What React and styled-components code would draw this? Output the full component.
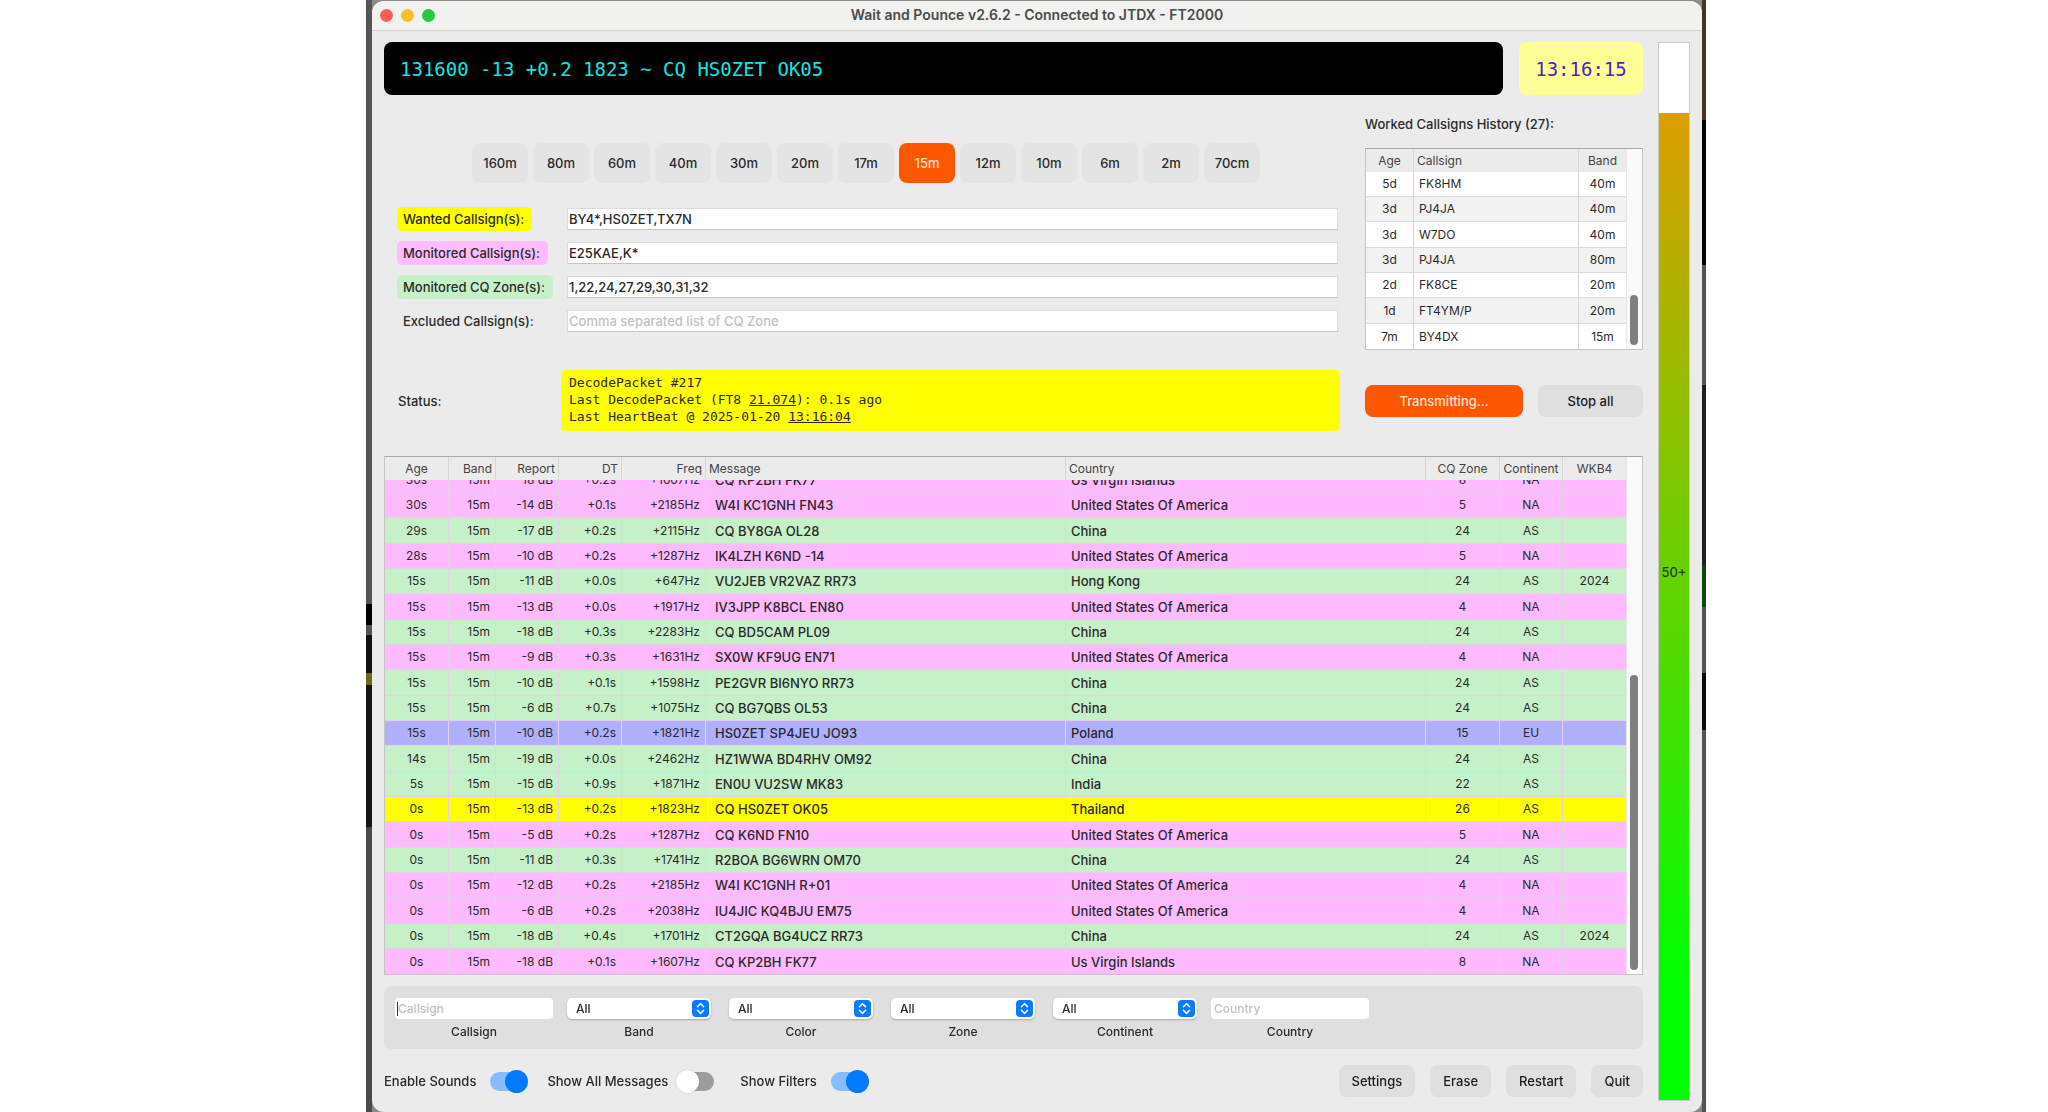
import React from "react";
import styled, { createGlobalStyle } from "styled-components";

const SANS = `Inter, "Liberation Sans", sans-serif`;
const MONO = `"DejaVu Sans Mono", "Liberation Mono", monospace`;

const GlobalStyle = createGlobalStyle`
  *, *::before, *::after { box-sizing: border-box; }
  body { margin: 0; background: #fff; font-family: ${SANS}; font-size: 13px; font-weight: 500; color: #2a2a2a; }
  button, input, select { font: inherit; color: inherit; margin: 0; }
`;

const Desktop = styled.div`
  height: 100vh;
  margin: 0 342px 0 366px;
  padding: 1px 4px 0 6px;
  display: flex;
  background:
    linear-gradient(#555 0 604px, #000 604px 625px, #555 625px 635px, #111 635px 673px, #6a6a1a 673px 685px, #151515 685px 827px, #4a4a4a 827px 100%) left / 6px 100% no-repeat,
    linear-gradient(#4a3226 0 120px, #050505 120px 265px, #555 265px 385px, #1f1f1f 385px 565px, #0a4a0a 565px 607px, #555 607px 673px, #0d0d0d 673px 730px, #555 730px 100%) right / 4px 100% no-repeat,
    #8a8a8a;
`;

const Window = styled.main`
  flex: 1;
  min-width: 0;
  display: flex;
  flex-direction: column;
  background: #ebebeb;
  border-radius: 12px;
  overflow: hidden;
`;

const TitleBar = styled.header`
  flex: none;
  height: 30px;
  padding: 0 8px;
  display: grid;
  grid-template-columns: 1fr auto 1fr;
  align-items: center;
  background: #f1f1f0;
  border-bottom: 1px solid #d2d2d0;
`;

const Lights = styled.div`
  display: flex;
  gap: 8px;
`;

const Light = styled.button`
  width: 13px;
  height: 13px;
  padding: 0;
  border: 0;
  border-radius: 50%;
  background: ${(p) => p.$color};
`;

const Title = styled.h1`
  margin: 0;
  padding-bottom: 2px;
  font-size: 14px;
  line-height: 20px;
  font-weight: 600;
  color: #4a4a4a;
`;

const Body = styled.div`
  flex: 1;
  min-height: 0;
  padding: 11px 12px;
  display: grid;
  grid-template-columns: minmax(0, 1fr) 32px;
  gap: 15px;
`;

const Main = styled.div`
  min-height: 0;
  padding-bottom: 4px;
  display: flex;
  flex-direction: column;
`;

const TopRow = styled.div`
  display: flex;
  gap: 16px;
`;

const Decode = styled.output`
  flex: 1;
  height: 53px;
  padding: 0 16px;
  display: flex;
  align-items: center;
  border-radius: 8px;
  background: #000;
  color: #17e3e3;
  font: 19px/24px ${MONO};
  white-space: pre;
`;

const Clock = styled.time`
  width: 124px;
  height: 53px;
  display: flex;
  align-items: center;
  justify-content: center;
  border-radius: 8px;
  background: #ffff96;
  color: #5223c9;
  font: 19px/24px ${MONO};
`;

const Setup = styled.div`
  padding-top: 18px;
  display: grid;
  grid-template-columns: minmax(0, 1fr) 278px;
  column-gap: 23px;
`;

const Left = styled.div`
  padding: 30px 4px 0 13px;
  display: flex;
  flex-direction: column;
  gap: 24px;
`;

const Bands = styled.div`
  padding-right: 3px;
  display: flex;
  justify-content: center;
  gap: 5px;
`;

const Band = styled.button`
  width: 56px;
  height: 40px;
  padding: 0;
  border: 0;
  border-radius: 8px;
  font-size: 13px;
  background: ${(p) => (p.$active ? "#ff5600" : "#e4e4e4")};
  color: ${(p) => (p.$active ? "#ffe3d5" : "#2a2a2a")};
`;

const Fields = styled.form`
  display: grid;
  grid-template-columns: 160px minmax(0, 1fr);
  column-gap: 10px;
  row-gap: 10px;
  align-items: center;
`;

const FieldLabel = styled.label`
  justify-self: start;
  height: 24px;
  padding: 0 8px 0 6px;
  border-radius: 5px;
  font-size: 13px;
  line-height: 24px;
  white-space: nowrap;
  background: ${(p) => p.$bg || "transparent"};
`;

const FieldInput = styled.input`
  width: 100%;
  height: 22px;
  padding: 0 1px;
  border: 1px solid #dcdcdc;
  border-bottom-color: #c4c4c4;
  background: #fff;
  font-size: 13px;
  outline: 0;
  &::placeholder { color: #c2c2c2; opacity: 1; }
`;

const History = styled.section`
  display: flex;
  flex-direction: column;
  gap: 13px;
`;

const HistoryTitle = styled.h2`
  margin: 0;
  font-size: 13px;
  line-height: 22px;
  font-weight: 500;
`;

const TableFrame = styled.div`
  display: flex;
  min-height: 0;
  flex: ${(p) => (p.$grow ? 1 : "none")};
  height: ${(p) => (p.$grow ? "auto" : "202px")};
  border: 1px solid #c4c4c4;
  border-top: 1px solid #a9a9a9;
  background: #fafafa;
`;

const Scroller = styled.div`
  flex: 1;
  min-width: 0;
  display: flex;
  flex-direction: column-reverse;
  overflow-y: auto;
  scrollbar-width: none;
`;

const Track = styled.div`
  width: 16px;
  padding: 4px 4px 4px 3px;
  display: flex;
  flex-direction: column;
  justify-content: flex-end;
  border-left: 1px solid #e6e6e6;
`;

const Thumb = styled.div`
  height: ${(p) => p.$size};
  border-radius: 4px;
  background: #7f7f7f;
`;

const Table = styled.table`
  flex: none;
  width: 100%;
  table-layout: fixed;
  border-collapse: separate;
  border-spacing: 0;
  font-size: 12px;
  font-weight: 400;
  line-height: 16px;
`;

const Th = styled.th`
  position: sticky;
  top: 0;
  height: 23px;
  padding: 0 3px;
  border-right: 1px solid #d6d6d6;
  background: #ebebeb;
  color: #444;
  font-weight: 400;
  text-align: ${(p) => p.$align || "center"};
  white-space: nowrap;
  &:last-child { border-right: 0; }
`;

const Td = styled.td`
  padding: 0 5px 0 ${(p) => p.$indent || 5}px;
  border-right: 1px solid ${(p) => (p.$plain ? "#d6d6d6" : "#e6d2e8")};
  border-bottom: 1px solid ${(p) => (p.$plain ? "#dcdcdc" : "#e6d2e8")};
  font-size: ${(p) => (p.$large ? 13 : 12)}px;
  font-weight: ${(p) => (p.$large ? 500 : 400)};
  text-align: ${(p) => p.$align || "center"};
  white-space: nowrap;
  &:last-child { border-right: 0; }
`;

const Tr = styled.tr`
  height: 25px;
  background: ${(p) => p.$bg};
  &:nth-child(3n) { height: 26px; }
  &:last-child td { border-bottom: 0; }
`;

const StatusRow = styled.div`
  padding-top: 20px;
  display: grid;
  grid-template-columns: 164px minmax(0, 1fr) 278px;
  column-gap: 13px;
  align-items: center;
`;

const StatusLabel = styled.span`
  padding-left: 14px;
  font-size: 13px;
`;

const StatusBox = styled.output`
  height: 61px;
  margin-right: 12px;
  padding: 4px 8px;
  border-radius: 5px;
  background: #ff0;
  font: 13px/17px ${MONO};
  white-space: pre;
`;

const Actions = styled.div`
  display: grid;
  grid-template-columns: minmax(0, 1fr) 105px;
  gap: 15px;
`;

const Button = styled.button`
  height: 32px;
  padding: 0 13px;
  border: 0;
  border-radius: 8px;
  font-size: 13px;
  background: ${(p) => (p.$hot ? "#ff5600" : "#dfdfdf")};
  color: ${(p) => (p.$hot ? "#ffe3d5" : "#1c1c1c")};
`;

const Messages = styled.section`
  flex: 1;
  min-height: 0;
  padding-top: 25px;
  display: flex;
  flex-direction: column;
`;

const Filters = styled.form`
  margin-top: 11px;
  height: 63px;
  padding: 12px 11px 0;
  display: flex;
  gap: 14px;
  border-radius: 8px;
  background: #dfdfdf;
`;

const Selects = styled.div`
  display: flex;
  gap: 18px;
`;

const Filter = styled.label`
  width: ${(p) => p.$w}px;
  display: flex;
  flex-direction: column;
  gap: 4px;
  font-size: 12px;
  line-height: 18px;
  text-align: center;
`;

const FilterInput = styled.input`
  height: 21px;
  width: 100%;
  padding: 0 3px;
  border: 0;
  border-radius: 4px;
  background: ${(p) =>
    p.$caret ? "linear-gradient(#333 0 0) 2px 4px / 1px 14px no-repeat, #fff" : "#fff"};
  caret-color: ${(p) => (p.$caret ? "transparent" : "auto")};
  font-size: 12px;
  outline: 0;
  &::placeholder { color: #c2c2c2; opacity: 1; }
`;

const SelectWrap = styled.span`
  position: relative;
  display: block;
  height: 21px;
`;

const Select = styled.select`
  display: block;
  width: 100%;
  height: 21px;
  padding: 0 9px;
  appearance: none;
  border: 0;
  border-radius: 5px;
  background: #fff;
  box-shadow: 0 1px 2px rgba(0, 0, 0, 0.25);
  font-size: 12px;
`;

const Stepper = styled.svg`
  position: absolute;
  top: 2px;
  right: 2px;
  pointer-events: none;
`;

const Footer = styled.footer`
  margin-top: 16px;
  height: 32px;
  display: flex;
  align-items: center;
  gap: 15px;
`;

const Toggle = styled.label`
  margin-right: ${(p) => (p.$wide ? 10 : 4)}px;
  display: flex;
  align-items: center;
  gap: ${(p) => (p.$wide ? 8 : 13)}px;
  font-size: 13px;
`;

const Switch = styled.input`
  appearance: none;
  position: relative;
  width: 39px;
  height: 23px;
  display: flex;
  justify-content: flex-start;
  &::before {
    content: "";
    position: absolute;
    inset: 2px 1px;
    border-radius: 10px;
    background: #9d9d9f;
  }
  &::after {
    content: "";
    position: relative;
    width: 23px;
    height: 23px;
    border-radius: 50%;
    background: #fff;
    box-shadow: 0 0 1px rgba(0, 0, 0, 0.35);
  }
  &:checked { justify-content: flex-end; }
  &:checked::before { background: #85bdff; }
  &:checked::after { background: #007aff; box-shadow: none; }
`;

const Spacer = styled.div`
  flex: 1;
`;

const Meter = styled.div`
  display: flex;
  flex-direction: column;
  justify-content: flex-end;
  position: relative;
  border: 1px solid #c9c9c9;
  background: #fff;
`;

const MeterFill = styled.div`
  background: linear-gradient(#dc9f00 0%, #00ff00 88%);
`;

const MeterText = styled.span`
  position: absolute;
  inset: 0;
  display: flex;
  align-items: center;
  justify-content: center;
  font-size: 13px;
  color: #24421c;
`;

const BANDS = ["160m", "80m", "60m", "40m", "30m", "20m", "17m", "15m", "12m", "10m", "6m", "2m", "70cm"];

const FIELDS = [
  { id: "wanted", label: "Wanted Callsign(s):", bg: "#ffff00", value: "BY4*,HS0ZET,TX7N" },
  { id: "monitored", label: "Monitored Callsign(s):", bg: "#ffbdff", value: "E25KAE,K*" },
  { id: "zones", label: "Monitored CQ Zone(s):", bg: "#c6f0c8", value: "1,22,24,27,29,30,31,32" },
  { id: "excluded", label: "Excluded Callsign(s):", value: "", placeholder: "Comma separated list of CQ Zone" },
];

const HISTORY = [
  ["5d", "FK8HM", "40m"],
  ["3d", "PJ4JA", "40m"],
  ["3d", "W7DO", "40m"],
  ["3d", "PJ4JA", "80m"],
  ["2d", "FK8CE", "20m"],
  ["1d", "FT4YM/P", "20m"],
  ["7m", "BY4DX", "15m"],
];

const COLUMNS = [
  { name: "Age", width: 64 },
  { name: "Band", width: 47, align: "right" },
  { name: "Report", width: 63, align: "right" },
  { name: "DT", width: 63, align: "right" },
  { name: "Freq", width: 84, align: "right" },
  { name: "Message", align: "left", large: true, indent: 9 },
  { name: "Country", align: "left", large: true },
  { name: "CQ Zone", width: 74 },
  { name: "Continent", width: 63 },
  { name: "WKB4", width: 63 },
];

const COLORS = { pink: "#ffbbff", green: "#c6f0c8", blue: "#b0b0ff", yellow: "#ffff00" };
const US = "United States Of America";

const ROWS = [
  ["pink", "30s", "-18 dB", "+0.2s", "+1607Hz", "CQ KP2BH FK77", "Us Virgin Islands", "8", "NA", ""],
  ["pink", "30s", "-14 dB", "+0.1s", "+2185Hz", "W4I KC1GNH FN43", US, "5", "NA", ""],
  ["green", "29s", "-17 dB", "+0.2s", "+2115Hz", "CQ BY8GA OL28", "China", "24", "AS", ""],
  ["pink", "28s", "-10 dB", "+0.2s", "+1287Hz", "IK4LZH K6ND -14", US, "5", "NA", ""],
  ["green", "15s", "-11 dB", "+0.0s", "+647Hz", "VU2JEB VR2VAZ RR73", "Hong Kong", "24", "AS", "2024"],
  ["pink", "15s", "-13 dB", "+0.0s", "+1917Hz", "IV3JPP K8BCL EN80", US, "4", "NA", ""],
  ["green", "15s", "-18 dB", "+0.3s", "+2283Hz", "CQ BD5CAM PL09", "China", "24", "AS", ""],
  ["pink", "15s", "-9 dB", "+0.3s", "+1631Hz", "SX0W KF9UG EN71", US, "4", "NA", ""],
  ["green", "15s", "-10 dB", "+0.1s", "+1598Hz", "PE2GVR BI6NYO RR73", "China", "24", "AS", ""],
  ["green", "15s", "-6 dB", "+0.7s", "+1075Hz", "CQ BG7QBS OL53", "China", "24", "AS", ""],
  ["blue", "15s", "-10 dB", "+0.2s", "+1821Hz", "HS0ZET SP4JEU JO93", "Poland", "15", "EU", ""],
  ["green", "14s", "-19 dB", "+0.0s", "+2462Hz", "HZ1WWA BD4RHV OM92", "China", "24", "AS", ""],
  ["green", "5s", "-15 dB", "+0.9s", "+1871Hz", "EN0U VU2SW MK83", "India", "22", "AS", ""],
  ["yellow", "0s", "-13 dB", "+0.2s", "+1823Hz", "CQ HS0ZET OK05", "Thailand", "26", "AS", ""],
  ["pink", "0s", "-5 dB", "+0.2s", "+1287Hz", "CQ K6ND FN10", US, "5", "NA", ""],
  ["green", "0s", "-11 dB", "+0.3s", "+1741Hz", "R2BOA BG6WRN OM70", "China", "24", "AS", ""],
  ["pink", "0s", "-12 dB", "+0.2s", "+2185Hz", "W4I KC1GNH R+01", US, "4", "NA", ""],
  ["pink", "0s", "-6 dB", "+0.2s", "+2038Hz", "IU4JIC KQ4BJU EM75", US, "4", "NA", ""],
  ["green", "0s", "-18 dB", "+0.4s", "+1701Hz", "CT2GQA BG4UCZ RR73", "China", "24", "AS", "2024"],
  ["pink", "0s", "-18 dB", "+0.1s", "+1607Hz", "CQ KP2BH FK77", "Us Virgin Islands", "8", "NA", ""],
];

function SelectFilter({ name }) {
  return (
    <Filter $w={144}>
      <SelectWrap>
        <Select defaultValue="All">
          <option>All</option>
        </Select>
        <Stepper width="17" height="17" viewBox="0 0 17 17" aria-hidden="true">
          <rect width="17" height="17" rx="4" fill="#0a7bff" />
          <path d="M5.4 6.7 8.5 3.6l3.1 3.1M5.4 10.3l3.1 3.1 3.1-3.1" fill="none" stroke="#fff" strokeWidth="1.5" strokeLinecap="round" strokeLinejoin="round" />
        </Stepper>
      </SelectWrap>
      {name}
    </Filter>
  );
}

function InputFilter({ name, focused }) {
  return (
    <Filter $w={158}>
      <FilterInput type="text" placeholder={name} autoFocus={focused} $caret={focused} />
      {name}
    </Filter>
  );
}

export default function App() {
  return (
    <>
      <GlobalStyle />
      <Desktop>
        <Window>
          <TitleBar>
            <Lights>
              <Light $color="#ff5f57" aria-label="Close" />
              <Light $color="#febc2e" aria-label="Minimize" />
              <Light $color="#28c840" aria-label="Zoom" />
            </Lights>
            <Title>Wait and Pounce v2.6.2 - Connected to JTDX - FT2000</Title>
          </TitleBar>
          <Body>
            <Main>
              <TopRow>
                <Decode>131600 -13 +0.2 1823 ~ CQ HS0ZET OK05</Decode>
                <Clock>13:16:15</Clock>
              </TopRow>
              <Setup>
                <Left>
                  <Bands>
                    {BANDS.map((b) => (
                      <Band key={b} type="button" $active={b === "15m"}>{b}</Band>
                    ))}
                  </Bands>
                  <Fields>
                    {FIELDS.map((f) => (
                      <React.Fragment key={f.id}>
                        <FieldLabel htmlFor={f.id} $bg={f.bg}>{f.label}</FieldLabel>
                        <FieldInput id={f.id} type="text" defaultValue={f.value} placeholder={f.placeholder} />
                      </React.Fragment>
                    ))}
                  </Fields>
                </Left>
                <History>
                  <HistoryTitle>Worked Callsigns History (27):</HistoryTitle>
                  <TableFrame>
                    <Scroller>
                      <Table>
                        <colgroup>
                          <col style={{ width: 48 }} />
                          <col />
                          <col style={{ width: 47 }} />
                        </colgroup>
                        <thead>
                          <tr>
                            <Th>Age</Th>
                            <Th $align="left">Callsign</Th>
                            <Th>Band</Th>
                          </tr>
                        </thead>
                        <tbody>
                          {HISTORY.map(([age, call, band], i) => (
                            <Tr key={i} $bg={i % 2 ? "#f2f2f2" : "#fff"}>
                              <Td $plain>{age}</Td>
                              <Td $plain $align="left">{call}</Td>
                              <Td $plain>{band}</Td>
                            </Tr>
                          ))}
                        </tbody>
                      </Table>
                    </Scroller>
                    <Track>
                      <Thumb $size="50px" />
                    </Track>
                  </TableFrame>
                </History>
              </Setup>
              <StatusRow>
                <StatusLabel>Status:</StatusLabel>
                <StatusBox>
                  DecodePacket #217{"\n"}Last DecodePacket (FT8 <u>21.074</u>): 0.1s ago{"\n"}Last HeartBeat @ 2025-01-20 <u>13:16:04</u>
                </StatusBox>
                <Actions>
                  <Button type="button" $hot>Transmitting...</Button>
                  <Button type="button">Stop all</Button>
                </Actions>
              </StatusRow>
              <Messages>
                <TableFrame $grow>
                  <Scroller>
                    <Table>
                      <colgroup>
                        {COLUMNS.map((c) => (
                          <col key={c.name} style={{ width: c.width }} />
                        ))}
                      </colgroup>
                      <thead>
                        <tr>
                          {COLUMNS.map((c) => (
                            <Th key={c.name} $align={c.align}>{c.name}</Th>
                          ))}
                        </tr>
                      </thead>
                      <tbody>
                        {ROWS.map(([color, age, ...rest], r) => (
                          <Tr key={r} $bg={COLORS[color]}>
                            {[age, "15m", ...rest].map((cell, i) => (
                              <Td key={i} $align={COLUMNS[i].align} $large={COLUMNS[i].large} $indent={COLUMNS[i].indent}>{cell}</Td>
                            ))}
                          </Tr>
                        ))}
                      </tbody>
                    </Table>
                  </Scroller>
                  <Track>
                    <Thumb $size="58%" />
                  </Track>
                </TableFrame>
              </Messages>
              <Filters>
                <InputFilter name="Callsign" focused />
                <Selects>
                  <SelectFilter name="Band" />
                  <SelectFilter name="Color" />
                  <SelectFilter name="Zone" />
                  <SelectFilter name="Continent" />
                </Selects>
                <InputFilter name="Country" />
              </Filters>
              <Footer>
                <Toggle>Enable Sounds<Switch type="checkbox" defaultChecked /></Toggle>
                <Toggle $wide>Show All Messages<Switch type="checkbox" /></Toggle>
                <Toggle>Show Filters<Switch type="checkbox" defaultChecked /></Toggle>
                <Spacer />
                <Button type="button">Settings</Button>
                <Button type="button">Erase</Button>
                <Button type="button">Restart</Button>
                <Button type="button">Quit</Button>
              </Footer>
            </Main>
            <Meter>
              <MeterFill style={{ height: "93.4%" }} />
              <MeterText>50+</MeterText>
            </Meter>
          </Body>
        </Window>
      </Desktop>
    </>
  );
}
